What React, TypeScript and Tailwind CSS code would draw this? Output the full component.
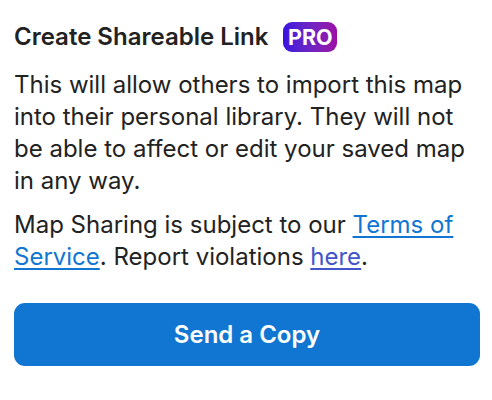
import React from "react";

export default function App() {
  return (
    <div className="w-[492px] h-[400px] bg-white px-[14px] pt-[22px] text-[#222222]" style={{ fontFamily: "Inter, 'Noto Sans', sans-serif" }}>
      <div className="flex items-center h-[30px]">
        <span className="text-[24px] font-semibold leading-[30px]">Create Shareable Link</span>
        <span className="ml-[15px] h-[30px] w-[54px] rounded-[9px] bg-gradient-to-r from-[#3a10e0] to-[#9c0aa6] text-white text-[21.5px] font-bold flex items-center justify-center">PRO</span>
      </div>
      <p className="mt-[17px] text-[24px] leading-[32px]">
        This will allow others to import this map into their personal library. They will not be able to affect or edit your saved map in any way.
      </p>
      <p className="mt-[12px] text-[24px] leading-[32px]">
        Map Sharing is subject to our <a href="#" className="text-[#1176d2] underline underline-offset-[3px]">Terms of Service</a>. Report violations <a href="#" className="text-[#4355c9] underline underline-offset-[3px]">here</a>.
      </p>
      <button className="mt-[30px] w-[466px] h-[63px] rounded-[11px] bg-[#1176d1] text-white text-[24px] font-semibold">Send a Copy</button>
    </div>
  );
}
